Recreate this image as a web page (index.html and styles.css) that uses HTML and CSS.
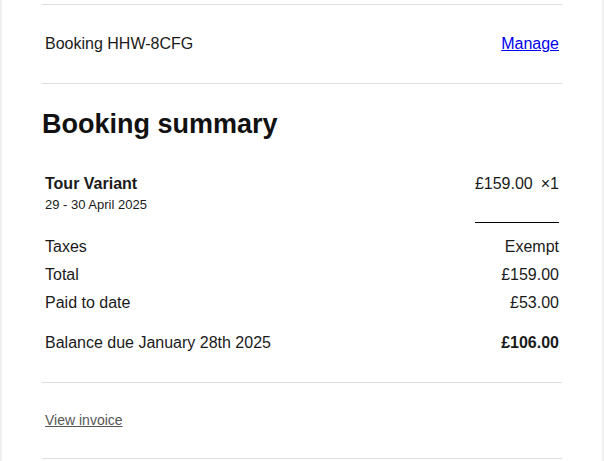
FILE: index.html
```html
<!DOCTYPE html>
<html lang="en">
<head>
<meta charset="utf-8">
<title>Booking summary</title>
<link rel="stylesheet" href="styles.css">
</head>
<body>
<div class="page">
  <div class="rule"></div>
  <div class="booking-row">
    <span>Booking HHW-8CFG</span>
    <a class="manage" href="#">Manage</a>
  </div>
  <div class="rule"></div>
  <h1 class="title">Booking summary</h1>
  <div class="item">
    <div class="item-info">
      <div class="item-name">Tour Variant</div>
      <div class="item-date">29 - 30 April 2025</div>
    </div>
    <div class="item-price"><span>£159.00</span><span class="qty">×1</span></div>
  </div>
  <div class="summary">
    <div class="line"><span>Taxes</span><span>Exempt</span></div>
    <div class="line"><span>Total</span><span>£159.00</span></div>
    <div class="line"><span>Paid to date</span><span>£53.00</span></div>
    <div class="line balance"><span>Balance due January 28th 2025</span><strong>£106.00</strong></div>
  </div>
  <div class="rule"></div>
  <div class="invoice-row">
    <a class="invoice" href="#">View invoice</a>
  </div>
  <div class="rule"></div>
</div>
</body>
</html>
```
FILE: styles.css
```css
html, body {
  margin: 0;
  padding: 0;
}
body {
  background: #f0f0f0;
  font-family: "Liberation Sans", Arial, Helvetica, sans-serif;
  color: #1a1a1a;
}
.page {
  width: 520px;
  margin: 0 auto;
  background: #ffffff;
  padding: 4px 40px 20px;
}
.rule {
  border-top: 1px solid #dddddd;
}
.booking-row {
  display: flex;
  justify-content: space-between;
  padding: 30px 3px;
  font-size: 16px;
  line-height: 18px;
}
.manage {
  color: #0000ee;
}
.title {
  margin: 24px 0 0;
  font-size: 27px;
  line-height: 32px;
  font-weight: bold;
  color: #111;
}
.item {
  display: flex;
  justify-content: space-between;
  align-items: flex-start;
  margin-top: 35px;
  padding: 0 3px;
}
.item-name {
  font-size: 16px;
  line-height: 18px;
  font-weight: bold;
}
.item-date {
  margin-top: 4px;
  font-size: 13px;
  line-height: 15px;
}
.item-price {
  display: flex;
  gap: 8px;
  font-size: 16px;
  line-height: 18px;
  padding-bottom: 29px;
  border-bottom: 1px solid #000;
}
.summary {
  margin-top: 10px;
  margin-bottom: 25px;
  padding: 0 3px;
}
.line {
  display: flex;
  justify-content: space-between;
  padding: 5px 0;
  font-size: 16px;
  line-height: 18px;
}
.line.balance {
  margin-top: 12px;
}
.invoice-row {
  padding: 29px 3px 30px;
  font-size: 14px;
  line-height: 16px;
}
.invoice {
  color: #555555;
}
```
